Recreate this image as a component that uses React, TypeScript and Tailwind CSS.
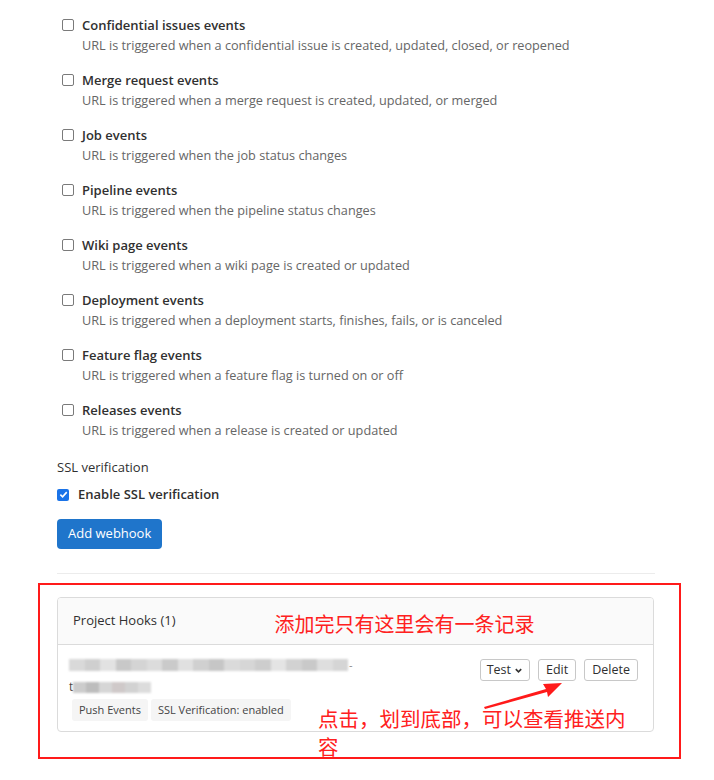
import React from "react";

const events = [
  ["Confidential issues events", "URL is triggered when a confidential issue is created, updated, closed, or reopened"],
  ["Merge request events", "URL is triggered when a merge request is created, updated, or merged"],
  ["Job events", "URL is triggered when the job status changes"],
  ["Pipeline events", "URL is triggered when the pipeline status changes"],
  ["Wiki page events", "URL is triggered when a wiki page is created or updated"],
  ["Deployment events", "URL is triggered when a deployment starts, finishes, fails, or is canceled"],
  ["Feature flag events", "URL is triggered when a feature flag is turned on or off"],
  ["Releases events", "URL is triggered when a release is created or updated"],
];

const blurA = ["#d9d9d9", "#cfcfcf", "#e2e2e2", "#c8c8c8", "#d4d4d4", "#dcdcdc", "#cacaca", "#e0e0e0", "#d0d0d0", "#c6c6c6", "#dadada", "#d6d6d6", "#cdcdcd", "#e4e4e4", "#d2d2d2", "#c9c9c9", "#dedede", "#d5d5d5"];
const blurB = ["#cccccc", "#bdbdbd", "#d6d6d6", "#cfc9c9", "#d2d2d2", "#dcdcdc"];

function Box() {
  return <span className="mt-[3px] h-[12px] w-[12px] shrink-0 rounded-[2px] border border-[#7a7a7a] bg-white" />;
}

export default function App() {
  return (
    <div className="relative w-[714px] h-[780px] bg-white text-[14px] text-[#303030] overflow-hidden" style={{ fontFamily: '"Open Sans", "Noto Sans", sans-serif' }}>
      <div className="pl-[62px] pt-[16px] flex flex-col gap-[16px]">
        {events.map(([t, d]) => (
          <div key={t} className="flex gap-[8px]">
            <Box />
            <div className="flex flex-col">
              <span className="font-semibold leading-[19px] text-[13px]">{t}</span>
              <span className="text-[#666] leading-[19px] text-[12.7px] mt-[1px]">{d}</span>
            </div>
          </div>
        ))}
      </div>

      <div className="pl-[57px] mt-[18px] text-[13px] leading-[19px]">SSL verification</div>
      <div className="pl-[57px] mt-[8px] flex items-center gap-[9px]">
        <span className="h-[12px] w-[12px] rounded-[2px] bg-[#1a73e8] flex items-center justify-center">
          <svg width="9" height="9" viewBox="0 0 10 10"><path d="M1.5 5.2 L4 7.6 L8.6 2.4" stroke="white" strokeWidth="1.8" fill="none" /></svg>
        </span>
        <span className="font-semibold text-[13px] leading-[19px]">Enable SSL verification</span>
      </div>
      <div className="pl-[57px] mt-[15px]">
        <button className="h-[30px] px-[11px] rounded-[4px] bg-[#1f75cb] text-white text-[13px]">Add webhook</button>
      </div>
      <div className="ml-[57px] mr-[59px] mt-[24px] h-px bg-[#ececec]" />

      <div className="ml-[38px] mr-[33px] mt-[9px] h-[176px] border-[2px] border-[#ff1a1a] pt-[12px] pl-[17px] pr-[25px]">
        <div className="rounded-[4px] border border-[#dbdbdb] overflow-hidden">
          <div className="h-[47px] bg-[#fafafa] border-b border-[#dbdbdb] flex items-center px-[15px]">
            <span className="text-[13px]">Project Hooks (1)</span>
            <span className="ml-[99px] mt-[6px] text-[20px] text-[#ff2020]" style={{ fontFamily: '"Noto Sans CJK SC", sans-serif' }}>添加完只有这里会有一条记录</span>
          </div>
          <div className="px-[11px] pt-[13px] pb-[10px] flex">
            <div className="flex-1">
              <div className="flex items-center h-[14px]">
                <div className="flex blur-[1px]">
                  {blurA.map((c, i) => (
                    <span key={i} className="h-[12px] w-[15.5px]" style={{ background: c }} />
                  ))}
                </div>
                <span className="text-[11px] text-[#888] ml-[1px]">-</span>
              </div>
              <div className="flex items-center h-[14px] mt-[8px]">
                <span className="text-[12px] text-[#444] leading-none">t</span>
                <div className="flex blur-[1px]">
                  {blurB.map((c, i) => (
                    <span key={i} className="h-[11px] w-[13px]" style={{ background: c }} />
                  ))}
                </div>
              </div>
              <div className="flex gap-[3px] mt-[5px] ml-[3px]">
                <span className="px-[7px] h-[22px] flex items-center rounded-[3px] bg-[#f5f5f5] text-[11px] text-[#444]">Push Events</span>
                <span className="px-[7px] h-[22px] flex items-center rounded-[3px] bg-[#f5f5f5] text-[11px] text-[#444]">SSL Verification: enabled</span>
              </div>
            </div>
            <div className="flex gap-[8px] items-start pr-[4px] mt-[1px]">
              <span className="h-[22px] px-[6px] flex items-center gap-[3px] rounded-[3px] border border-[#c8c8c8] text-[12.5px]">
                Test
                <svg width="9" height="9" viewBox="0 0 10 10"><path d="M2 3.5 L5 6.5 L8 3.5" stroke="#333" strokeWidth="1.8" fill="none" /></svg>
              </span>
              <span className="h-[22px] px-[7px] flex items-center rounded-[3px] border border-[#c8c8c8] text-[12.5px]">Edit</span>
              <span className="h-[22px] px-[7px] flex items-center rounded-[3px] border border-[#c8c8c8] text-[12.5px]">Delete</span>
            </div>
          </div>
        </div>
      </div>

      <div className="absolute left-[318px] top-[704px] w-[320px] text-[20.5px] leading-[28px] text-[#ff2020]" style={{ fontFamily: '"Noto Sans CJK SC", sans-serif' }}>
        点击，划到底部，可以查看推送内容
      </div>
      <svg className="absolute left-[480px] top-[678px]" width="90" height="35" viewBox="0 0 90 35">
        <path d="M4 29 L66 11 L63 6 L82 5 L68 19 L67 14 L5 31 Z" fill="#ff1a1a" />
      </svg>
    </div>
  );
}
